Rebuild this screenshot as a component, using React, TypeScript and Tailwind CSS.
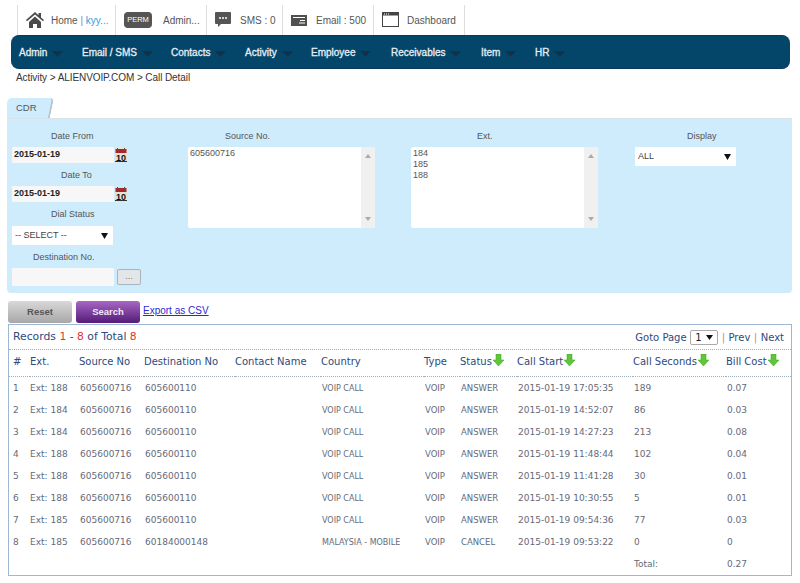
import React from "react";

const arial = "font-['Liberation_Sans',Arial,sans-serif]";
const tableFont = "font-['DejaVu_Sans',Verdana,sans-serif]";

function Caret() {
  return (
    <svg width="11" height="6" viewBox="0 0 11 6" className="mt-[4px]">
      <path d="M0 0H11L5.500 6Z" fill="#12324a" />
    </svg>
  );
}

function HomeIcon() {
  return (
    <svg width="18" height="16" viewBox="0 0 18 16">
      <path d="M9 0 0 8l1 1.200L9 2.400l8 6.800L18 8l-3-2.600V1h-2.500v2.200Z" fill="#4a4a4a" />
      <path d="M3 10 9 4.600 15 10v6h-4v-4H7v4H3Z" fill="#4a4a4a" />
    </svg>
  );
}

function ChatIcon() {
  return (
    <svg width="16" height="16" viewBox="0 0 16 16">
      <path d="M1 0h14a1 1 0 0 1 1 1v10a1 1 0 0 1-1 1H6l-3 3v-3H1a1 1 0 0 1-1-1V1a1 1 0 0 1 1-1Z" fill="#555" />
      <circle cx="5" cy="6" r="1" fill="#fff" />
      <circle cx="8" cy="6" r="1" fill="#fff" />
      <circle cx="11" cy="6" r="1" fill="#fff" />
    </svg>
  );
}

function MailIcon() {
  return (
    <svg width="16" height="11" viewBox="0 0 16 11">
      <rect width="16" height="11" fill="#505050" />
      <rect x="2" y="2" width="12" height="1" fill="#fff" />
      <rect x="9" y="5" width="5" height="1" fill="#fff" />
      <rect x="8" y="7.500" width="6" height="1" fill="#fff" />
    </svg>
  );
}

function WindowIcon() {
  return (
    <svg width="18" height="16" viewBox="0 0 18 16">
      <rect x="0.500" y="0.500" width="16" height="14" fill="#fff" stroke="#444" />
      <rect x="0.500" y="0.500" width="16" height="3" fill="#444" />
      <rect x="2" y="1.500" width="1" height="1" fill="#fff" />
      <rect x="4" y="1.500" width="1" height="1" fill="#fff" />
      <rect x="6" y="1.500" width="1" height="1" fill="#fff" />
    </svg>
  );
}

function Calendar() {
  return (
    <svg width="12" height="14" viewBox="0 0 12 14">
      <rect width="12" height="14" fill="#e8e2d6" />
      <rect x="0.500" y="1" width="11" height="4" fill="#a5282c" />
      <rect x="2" y="0" width="1" height="2" fill="#555" />
      <rect x="9" y="0" width="1" height="2" fill="#555" />
      <text x="6" y="12.500" textAnchor="middle" fontSize="9" fontWeight="700" fill="#111" fontFamily="Liberation Sans, sans-serif">
        10
      </text>
      <rect x="0" y="13" width="12" height="1" fill="#333" />
    </svg>
  );
}

function GreenArrow() {
  return (
    <svg width="11" height="12" viewBox="0 0 11 12" className="mb-[3px] shrink-0">
      <path d="M3 0h5v6h3l-5.500 6L0 6h3Z" fill="#5fc63a" stroke="#3f9e25" strokeWidth="0.500" />
    </svg>
  );
}

function SelectBox({ text, w }: { text: string; w: string }) {
  return (
    <div className={`flex h-[19px] items-center justify-between rounded-[1px] bg-white pl-[3px] pr-[5px] text-[9px] text-[#444] ${w}`}>
      <span>{text}</span>
      <svg width="7" height="6" viewBox="0 0 7 6">
        <path d="M0 0H7L3.500 6Z" fill="#111" />
      </svg>
    </div>
  );
}

function ListBox({ items, w }: { items: string[]; w: string }) {
  return (
    <div className={`flex h-[81px] justify-between rounded-[2px] bg-white text-[9px] leading-[11px] text-[#555] ${w}`}>
      <div className="pl-[2px] pt-[1px]">
        {items.map((i) => (
          <div key={i}>{i}</div>
        ))}
      </div>
      <div className="flex w-[14px] flex-col items-center justify-between bg-[#f0f0f0] py-[7px]">
        <svg width="6" height="4" viewBox="0 0 6 4">
          <path d="M3 0 6 4H0Z" fill="#aaa" />
        </svg>
        <svg width="6" height="4" viewBox="0 0 6 4">
          <path d="M0 0H6L3 4Z" fill="#aaa" />
        </svg>
      </div>
    </div>
  );
}

const rows = [
  ["1", "Ext: 188", "605600716", "605600110", "", "VOIP CALL", "VOIP", "ANSWER", "2015-01-19 17:05:35", "189", "0.07"],
  ["2", "Ext: 184", "605600716", "605600110", "", "VOIP CALL", "VOIP", "ANSWER", "2015-01-19 14:52:07", "86", "0.03"],
  ["3", "Ext: 184", "605600716", "605600110", "", "VOIP CALL", "VOIP", "ANSWER", "2015-01-19 14:27:23", "213", "0.08"],
  ["4", "Ext: 188", "605600716", "605600110", "", "VOIP CALL", "VOIP", "ANSWER", "2015-01-19 11:48:44", "102", "0.04"],
  ["5", "Ext: 188", "605600716", "605600110", "", "VOIP CALL", "VOIP", "ANSWER", "2015-01-19 11:41:28", "30", "0.01"],
  ["6", "Ext: 188", "605600716", "605600110", "", "VOIP CALL", "VOIP", "ANSWER", "2015-01-19 10:30:55", "5", "0.01"],
  ["7", "Ext: 185", "605600716", "605600110", "", "VOIP CALL", "VOIP", "ANSWER", "2015-01-19 09:54:36", "77", "0.03"],
  ["8", "Ext: 185", "605600716", "60184000148", "", "MALAYSIA - MOBILE", "VOIP", "CANCEL", "2015-01-19 09:53:22", "0", "0"],
];

const headers: [string, boolean][] = [
  ["#", false],
  ["Ext.", false],
  ["Source No", false],
  ["Destination No", false],
  ["Contact Name", false],
  ["Country", false],
  ["Type", false],
  ["Status", true],
  ["Call Start", true],
  ["Call Seconds", true],
  ["Bill Cost", true],
];

const widths = [21, 49, 65, 91, 86, 103, 36, 57, 116, 93, 65];

function cellClass(i: number) {
  if (i === 0) return "pl-[4px]";
  if (i === 1) return "";
  if (i === 5) return "pl-[1px] text-[8px]";
  if (i === 6 || i === 7) return "pl-[1px] text-[8.500px]";
  return "pl-[1px]";
}

export default function App() {
  return (
    <div className={`${arial} relative h-[583px] w-[800px] overflow-hidden bg-white`}>
      <div className="flex h-[35px] pl-[17px] pt-[5px] text-[10px] text-[#555]">
        <div className="flex w-[98px] items-center gap-[7px] border-l border-[#ddd] pl-[8px]">
          <HomeIcon />
          <span className="whitespace-nowrap">
            Home <span className="text-[#888]">|</span> <span className="text-[#3b9dd8]">kyy...</span>
          </span>
        </div>
        <div className="flex w-[91px] items-center gap-[11px] border-l border-[#ddd] pl-[8px]">
          <span className="flex h-[16px] w-[28px] items-center justify-center rounded-[4px] bg-[#555] text-[7.500px] text-white">PERM</span>
          <span>Admin...</span>
        </div>
        <div className="flex w-[76px] items-center gap-[9px] border-l border-[#ddd] pl-[8px]">
          <ChatIcon />
          <span>SMS : 0</span>
        </div>
        <div className="flex w-[91px] items-center gap-[9px] border-l border-[#ddd] pl-[8px]">
          <MailIcon />
          <span>Email : 500</span>
        </div>
        <div className="flex w-[92px] items-center gap-[7px] border-x border-[#ddd] pl-[8px]">
          <WindowIcon />
          <span>Dashboard</span>
        </div>
      </div>

      <div className="ml-[11px] flex h-[34px] w-[779px] items-center rounded-[8px] border-b border-t border-[#0a3a5c] bg-[#04466a] pl-[8px] text-[10px] text-[#e8eef2] [-webkit-text-stroke:0.300px_#e8eef2]">
        {[
          ["Admin", "w-[63px]"],
          ["Email / SMS", "w-[89px]"],
          ["Contacts", "w-[74px]"],
          ["Activity", "w-[66px]"],
          ["Employee", "w-[80px]"],
          ["Receivables", "w-[90px]"],
          ["Item", "w-[54px]"],
          ["HR", "w-[40px]"],
        ].map(([t, w]) => (
          <div key={t} className={`flex items-center gap-[5px] ${w}`}>
            <span>{t}</span>
            <Caret />
          </div>
        ))}
      </div>

      <div className="pl-[16px] pt-[2px] text-[10px] leading-[13px] tracking-[-0.080px] text-[#333]">Activity &gt; ALIENVOIP.COM &gt; Call Detail</div>

      <div className="ml-[7px] mt-[14px] w-[785px]">
        <div className="relative flex h-[20px] w-[42px] items-center rounded-tl-[5px] bg-[#cfecfd] pl-[9px] text-[9.500px] text-[#555]">
          CDR
          <div className="absolute right-[-3px] top-0 h-[20px] w-[6px] -skew-x-12 rounded-tr-[4px] border-r-2 border-[#b5c4ce] bg-[#cfecfd]" />
        </div>
        <div className="flex h-[175px] rounded-b-[4px] border-t border-[#d9e2e8] bg-[#cfecfd] text-[9px] text-[#555]">
          <div className="ml-[5px] w-[129px] pt-[11px]">
            <div className="h-[17px] pl-[39px] leading-[13px]">Date From</div>
            <div className="flex items-center gap-[1px]">
              <div className="flex h-[16px] w-[102px] items-center rounded-[1px] bg-[#f7f7f7] pl-[2px] font-bold text-[#222]">2015-01-19</div>
              <Calendar />
            </div>
            <div className="h-[23px] pl-[49px] pt-[6px] leading-[13px]">Date To</div>
            <div className="flex items-center gap-[1px]">
              <div className="flex h-[16px] w-[102px] items-center rounded-[1px] bg-[#f7f7f7] pl-[2px] font-bold text-[#222]">2015-01-19</div>
              <Calendar />
            </div>
            <div className="h-[24px] pl-[39px] pt-[6px] leading-[13px]">Dial Status</div>
            <SelectBox text="-- SELECT --" w="w-[101px]" />
            <div className="h-[23px] pl-[21px] pt-[6px] leading-[13px]">Destination No.</div>
            <div className="flex items-center gap-[3px]">
              <div className="h-[18px] w-[102px] rounded-[1px] bg-[#f7f7f7]" />
              <div className="flex h-[16px] w-[24px] items-center justify-center rounded-[2px] border border-[#a9b5bc] bg-[#e2e6e8] text-[#777]">...</div>
            </div>
          </div>
          <div className="ml-[47px] w-[187px] pt-[11px]">
            <div className="h-[17px] pl-[37px] leading-[13px]">Source No.</div>
            <ListBox items={["605600716"]} w="w-[187px]" />
          </div>
          <div className="ml-[36px] w-[187px] pt-[11px]">
            <div className="h-[17px] pl-[66px] leading-[13px]">Ext.</div>
            <ListBox items={["184", "185", "188"]} w="w-[187px]" />
          </div>
          <div className="ml-[37px] w-[101px] pt-[11px]">
            <div className="h-[17px] pl-[52px] leading-[13px]">Display</div>
            <SelectBox text="ALL" w="w-[101px]" />
          </div>
        </div>
      </div>

      <div className="ml-[8px] mt-[8px] flex h-[22px] items-start text-[9.500px] font-bold">
        <div className="flex h-[22px] w-[64px] items-center justify-center rounded-[3px] bg-gradient-to-b from-[#d8d8d8] to-[#a8a8a8] text-[#555]">Reset</div>
        <div className="ml-[4px] flex h-[22px] w-[64px] items-center justify-center rounded-[3px] bg-gradient-to-b from-[#a867c4] to-[#551a78] text-[#f2e6f7]">Search</div>
        <span className="ml-[3px] text-[10px] font-normal leading-[20px] text-[#2a2ad0] underline">Export as CSV</span>
      </div>

      <div className={`${tableFont} ml-[8px] mt-[1px] h-[252px] w-[784px] border border-[#9cb8d4] text-[#2e4a7e]`}>
        <div className="flex h-[25px] items-center justify-between border-b border-dotted border-[#9fb0bc] pl-[4px] pr-[7px]">
          <div className="text-[10.800px]">
            Records <span className="text-[#e8322e]">1</span> - <span className="text-[#e8322e]">8</span> of Total <span className="text-[#e8322e]">8</span>
          </div>
          <div className="flex items-center gap-[3.500px] text-[10px]">
            <span>Goto Page</span>
            <span className="flex h-[15px] w-[28px] items-center justify-between rounded-[2px] border border-[#aaa] bg-white px-[4px] text-[10px] text-[#222]">
              1
              <svg width="7" height="5" viewBox="0 0 7 5">
                <path d="M0 0H7L3.500 5Z" fill="#111" />
              </svg>
            </span>
            <span className="text-[#999]">|</span>
            <span>Prev</span>
            <span className="text-[#999]">|</span>
            <span>Next</span>
          </div>
        </div>
        <table className="w-full table-fixed border-collapse">
          <colgroup>
            {widths.map((w, i) => (
              <col key={i} style={{ width: w }} />
            ))}
          </colgroup>
          <thead>
            <tr className="h-[26px] border-b border-dotted border-[#9fb0bc]">
              {headers.map(([h, arrow], i) => (
                <th key={i} className={`whitespace-nowrap pb-[2px] text-left align-middle text-[10px] font-normal ${i === 0 ? "pl-[4px]" : ""}`}>
                  <span className="inline-flex items-center gap-[1px]">
                    {h}
                    {arrow && <GreenArrow />}
                  </span>
                </th>
              ))}
            </tr>
          </thead>
          <tbody>
            {rows.map((r) => (
              <tr key={r[0]} className="h-[22px] text-[9px] text-[#666a78]">
                {r.map((c, i) => (
                  <td key={i} className={`whitespace-nowrap pt-[1px] align-baseline leading-[21px] ${cellClass(i)}`}>
                    {c}
                  </td>
                ))}
              </tr>
            ))}
            <tr className="h-[22px] text-[9px] text-[#666a78]">
              <td colSpan={9} />
              <td className="pl-[1px] pt-[1px] leading-[21px]">Total:</td>
              <td className="pl-[1px] pt-[1px] leading-[21px]">0.27</td>
            </tr>
          </tbody>
        </table>
      </div>
    </div>
  );
}
